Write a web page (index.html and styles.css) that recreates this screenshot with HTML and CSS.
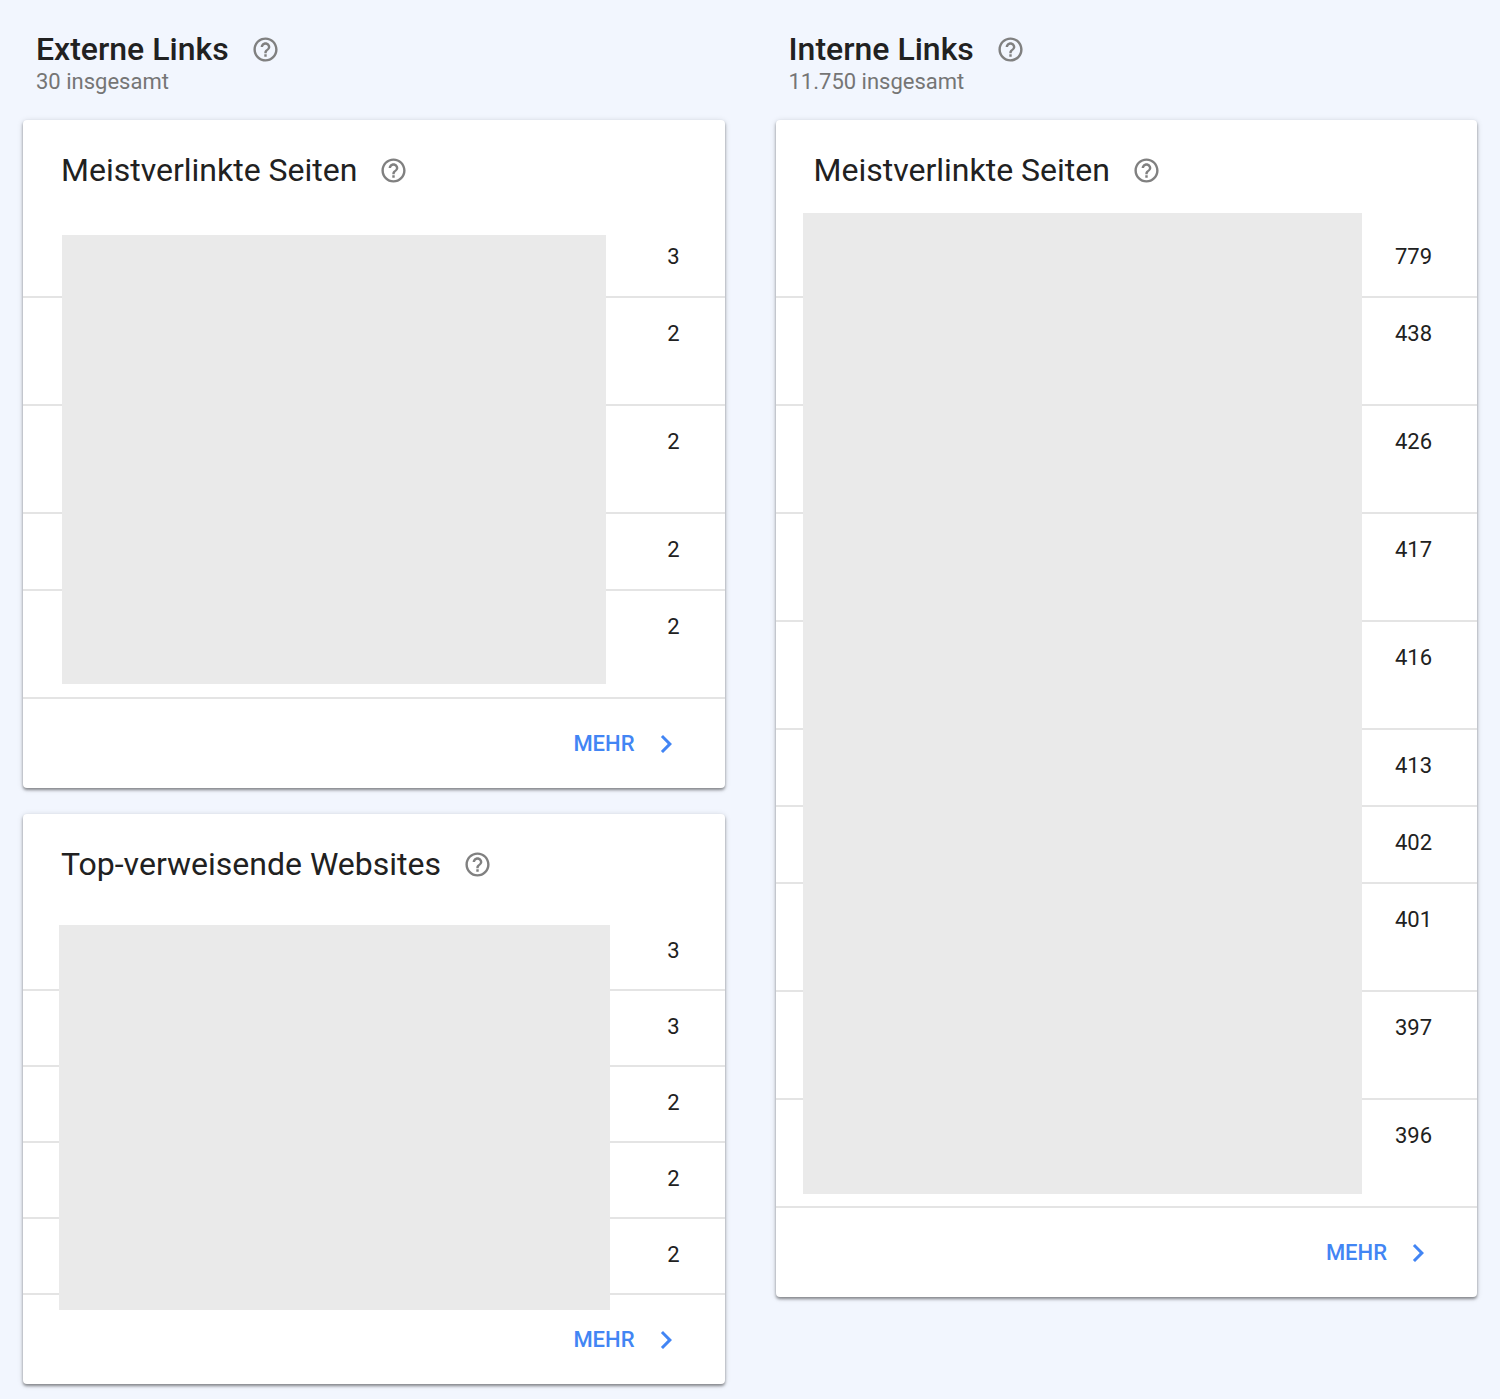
FILE: index.html
```html
<!DOCTYPE html>
<html lang="de">
<head>
  <title>Links</title>
  <meta charset="UTF-8">
  <meta name="viewport" content="width=device-width, initial-scale=1.0">
  <link rel="stylesheet" href="styles.css">
</head>
<body>
  <svg class="icon-defs" aria-hidden="true">
    <symbol id="icon-help" viewBox="0 0 24 24">
      <path d="M11 18h2v-2h-2v2zm1-16C6.48 2 2 6.48 2 12s4.48 10 10 10 10-4.48 10-10S17.52 2 12 2zm0 18c-4.41 0-8-3.59-8-8s3.59-8 8-8 8 3.59 8 8-3.59 8-8 8zm0-14c-2.21 0-4 1.79-4 4h2c0-1.1.9-2 2-2s2 .9 2 2c0 2-3 1.75-3 5h2c0-2.25 3-2.5 3-5 0-2.21-1.79-4-4-4z"/>
    </symbol>
    <symbol id="icon-chevron" viewBox="0 0 24 24">
      <path d="M10 6L8.59 7.41 13.17 12l-4.58 4.59L10 18l6-6z"/>
    </symbol>
  </svg>

  <main class="links-report">
    <section class="column">
      <header class="column-header">
        <div class="heading-row">
          <h1>Externe Links</h1>
          <button type="button" class="help-button" aria-label="Hilfe"><svg><use href="#icon-help"/></svg></button>
        </div>
        <p class="total">30 insgesamt</p>
      </header>

      <div class="card">
        <div class="card-header">
          <h2>Meistverlinkte Seiten</h2>
          <button type="button" class="help-button" aria-label="Hilfe"><svg><use href="#icon-help"/></svg></button>
        </div>
        <div class="table-wrap">
          <table>
            <tr><td class="url"></td><td class="count">3</td></tr>
            <tr class="tall"><td class="url"></td><td class="count">2</td></tr>
            <tr class="tall"><td class="url"></td><td class="count">2</td></tr>
            <tr><td class="url"></td><td class="count">2</td></tr>
            <tr class="tall"><td class="url"></td><td class="count">2</td></tr>
          </table>
          <div class="redacted redacted-external"></div>
        </div>
        <div class="card-footer">
          <a href="#" class="more">MEHR <svg><use href="#icon-chevron"/></svg></a>
        </div>
      </div>

      <div class="card">
        <div class="card-header">
          <h2>Top-verweisende Websites</h2>
          <button type="button" class="help-button" aria-label="Hilfe"><svg><use href="#icon-help"/></svg></button>
        </div>
        <div class="table-wrap">
          <table class="compact">
            <tr><td class="url"></td><td class="count">3</td></tr>
            <tr><td class="url"></td><td class="count">3</td></tr>
            <tr><td class="url"></td><td class="count">2</td></tr>
            <tr><td class="url"></td><td class="count">2</td></tr>
            <tr><td class="url"></td><td class="count">2</td></tr>
          </table>
          <div class="redacted redacted-sites"></div>
        </div>
        <div class="card-footer">
          <a href="#" class="more">MEHR <svg><use href="#icon-chevron"/></svg></a>
        </div>
      </div>
    </section>

    <section class="column">
      <header class="column-header">
        <div class="heading-row">
          <h1>Interne Links</h1>
          <button type="button" class="help-button" aria-label="Hilfe"><svg><use href="#icon-help"/></svg></button>
        </div>
        <p class="total">11.750 insgesamt</p>
      </header>

      <div class="card">
        <div class="card-header">
          <h2>Meistverlinkte Seiten</h2>
          <button type="button" class="help-button" aria-label="Hilfe"><svg><use href="#icon-help"/></svg></button>
        </div>
        <div class="table-wrap">
          <table>
            <tr><td class="url"></td><td class="count">779</td></tr>
            <tr class="tall"><td class="url"></td><td class="count">438</td></tr>
            <tr class="tall"><td class="url"></td><td class="count">426</td></tr>
            <tr class="tall"><td class="url"></td><td class="count">417</td></tr>
            <tr class="tall"><td class="url"></td><td class="count">416</td></tr>
            <tr><td class="url"></td><td class="count">413</td></tr>
            <tr><td class="url"></td><td class="count">402</td></tr>
            <tr class="tall"><td class="url"></td><td class="count">401</td></tr>
            <tr class="tall"><td class="url"></td><td class="count">397</td></tr>
            <tr class="tall"><td class="url"></td><td class="count">396</td></tr>
          </table>
          <div class="redacted redacted-internal"></div>
        </div>
        <div class="card-footer">
          <a href="#" class="more">MEHR <svg><use href="#icon-chevron"/></svg></a>
        </div>
      </div>
    </section>
  </main>
</body>
</html>
```
FILE: styles.css
```css
* {
  box-sizing: border-box;
}

body {
  margin: 0;
  font-family: Roboto, "Liberation Sans", sans-serif;
  font-size: 22px;
  line-height: 26px;
  color: #212121;
  background-color: #f2f6fe;
}

h1, h2, p {
  margin: 0;
}

.icon-defs {
  display: none;
}

.links-report {
  display: grid;
  grid-template-columns: 1fr 1fr;
  gap: 51px;
  align-items: start;
  padding: 30px 23px 13px;
}

.column-header {
  padding: 0 13px 25px;
}

.heading-row,
.card-header {
  display: flex;
  align-items: center;
  gap: 22px;
}

h1 {
  font-size: 32px;
  line-height: 39px;
  font-weight: 500;
}

h2 {
  font-size: 32px;
  line-height: 40px;
  font-weight: 400;
}

.total {
  color: #757575;
}

.help-button {
  display: flex;
  padding: 0;
  border: none;
  background: none;
  color: #808080;
  cursor: pointer;
}

.help-button svg {
  width: 29px;
  height: 29px;
  fill: currentColor;
}

.card {
  background-color: #fff;
  border-radius: 4px;
  box-shadow: 0 2px 3px rgba(0, 0, 0, 0.4), 0 1px 6px rgba(0, 0, 0, 0.14);
}

.card + .card {
  margin-top: 26px;
}

.card-header {
  padding: 30px 38px 31px;
}

/* the grey block hides the urls, it sits on top of the rows */
.table-wrap {
  position: relative;
}

table {
  width: 100%;
  border-collapse: separate;
  border-spacing: 0;
}

td {
  height: 77px;
  padding: 23px 45px 0;
  border-bottom: 2px solid #e4e4e4;
  vertical-align: top;
}

.tall td {
  height: 108px;
}

.compact td {
  height: 76px;
}

.count {
  text-align: right;
}

.redacted {
  position: absolute;
  background-color: #eaeaea;
}

.redacted-external {
  top: 14px;
  right: 119px;
  bottom: 15px;
  left: 39px;
}

.redacted-sites {
  top: 10px;
  right: 115px;
  bottom: -15px;
  left: 36px;
}

.redacted-internal {
  top: -8px;
  right: 115px;
  bottom: 14px;
  left: 27px;
}

.card-footer {
  display: flex;
  justify-content: flex-end;
  padding: 27px 41px 26px;
}

.more {
  display: flex;
  align-items: center;
  gap: 13px;
  color: #4285f4;
  font-weight: 500;
  text-decoration: none;
}

.more svg {
  width: 36px;
  height: 36px;
  fill: currentColor;
}
```
